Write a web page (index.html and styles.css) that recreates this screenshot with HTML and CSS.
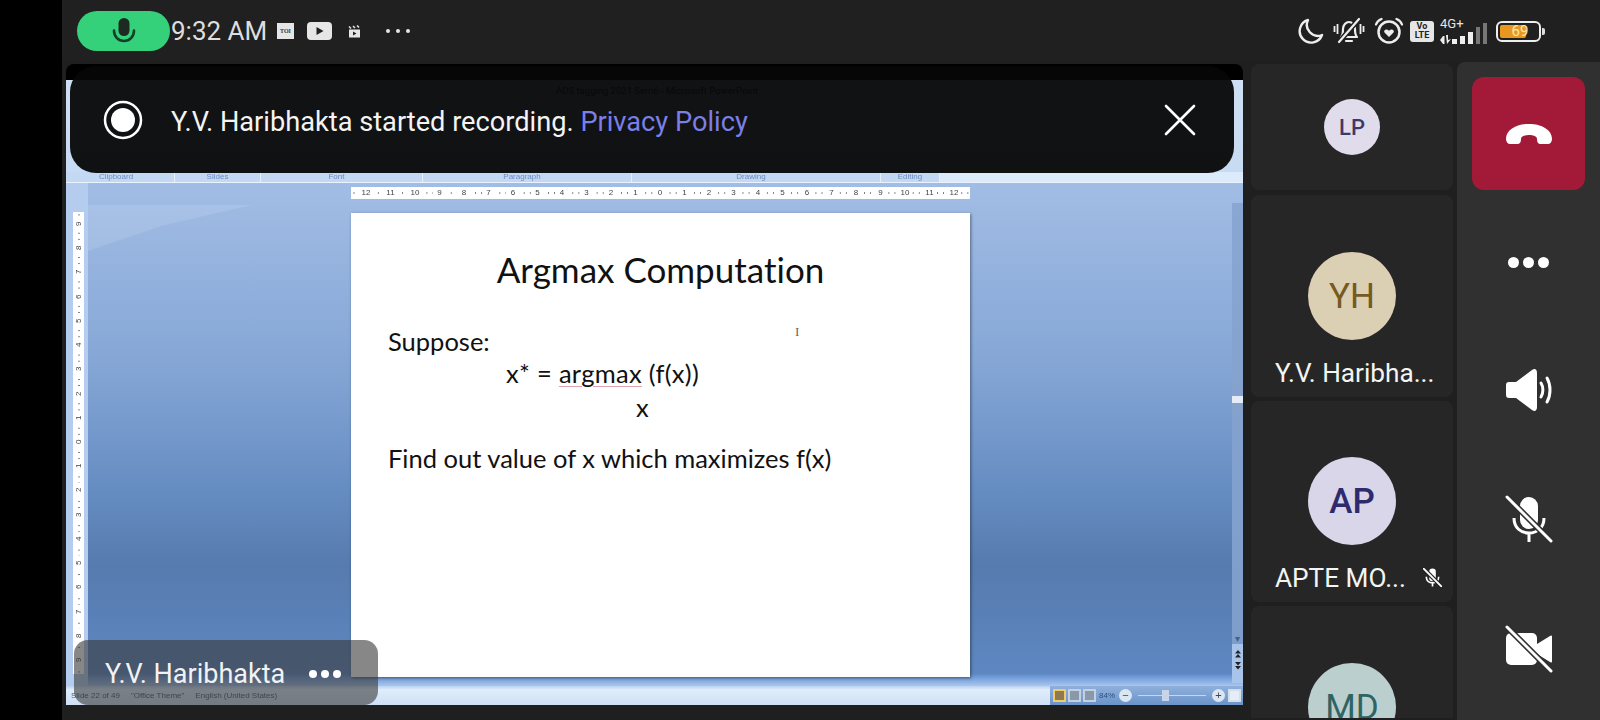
FILE: index.html
```html
<!DOCTYPE html>
<html lang="en">
  <head>
    <meta charset="UTF-8" />
    <title>Meeting</title>
    <link rel="stylesheet" href="styles.css">
  </head>
  <body>
    <div class="phone">
      <header class="status-bar">
        <div class="mic-pill">
          <svg width="24" height="28" viewBox="0 0 24 28"><rect x="6.500" y="1" width="11" height="18" rx="5.500" fill="#1d2a22"/><path d="M2 13.500c0 6.500 4.500 10.500 10 10.500s10-4 10-10.500" fill="none" stroke="#123f28" stroke-width="2.600" stroke-linecap="round"/></svg>
        </div>
        <span class="clock">9:32 AM</span>
        <span class="toi-icon">TOI</span>
        <svg class="yt-icon" width="25" height="18" viewBox="0 0 25 18"><rect width="25" height="18" rx="4" fill="#e6e6e6"/><path d="M9.500 5l7 4-7 4z" fill="#202020"/></svg>
        <svg class="clap-icon" width="13" height="13" viewBox="0 0 13 13"><path d="M1 4.500h11v8H1z" fill="#e6e6e6"/><path d="M5 6.500l3.500 2-3.500 2z" fill="#202020"/><path d="M1 1.500l2 2M5 1l2 2M9 .5l2 2" stroke="#e6e6e6" stroke-width="1.500"/></svg>
        <div class="more-dots"><i></i><i></i><i></i></div>

        <div class="status-right">
          <svg width="26" height="26" viewBox="0 0 26 26"><path d="M10 2A11.500 11.500 0 1 0 24 17 11 11 0 0 1 10 2z" fill="none" stroke="#eee" stroke-width="2.400" stroke-linejoin="round"/></svg>
          <svg class="bell" width="32" height="28" viewBox="0 0 32 28"><path d="M8 20c2-2 2-5 2-8 0-4 3-7 6-7s6 3 6 7c0 3 0 6 2 8z" fill="none" stroke="#eee" stroke-width="2.200" stroke-linejoin="round"/><path d="M13 24h6" stroke="#eee" stroke-width="2.200" stroke-linecap="round"/><path d="M1.500 9v6M4.500 7v10M27.500 7v10M30.500 9v6" stroke="#eee" stroke-width="1.800"/><path d="M6 25L26 2" stroke="#202020" stroke-width="5"/><path d="M6 25L26 2" stroke="#eee" stroke-width="2.200" stroke-linecap="round"/></svg>
          <svg class="alarm" width="30" height="28" viewBox="0 0 30 28"><circle cx="15" cy="15" r="10.500" fill="none" stroke="#eee" stroke-width="2.500"/><path d="M2 7.500C3 4.500 5 3 7.500 2M28 7.500C27 4.500 25 3 22.500 2" fill="none" stroke="#eee" stroke-width="2.300" stroke-linecap="round"/><path d="M15 20l-4.500-4.500c-1.500-2 1.800-4.500 4.500-1.800 2.700-2.700 6-.2 4.500 1.800z" fill="#eee"/></svg>
          <div class="volte">Vo<br />LTE</div>
          <div class="network">
            <span class="net-type">4G+</span>
            <svg class="net-arrows" width="11" height="9" viewBox="0 0 11 9"><path d="M0 5l3-4v8zM6 0h2v5l3-1-4 5z" fill="#eee"/><path d="M3 1h1.500v8H3z" fill="#eee"/></svg>
            <div class="bars"><i class="bar-a"></i><i class="bar-b"></i><i class="bar-c"></i><i class="bar-d"></i><i class="bar-e"></i></div>
          </div>
          <div class="battery"><div class="battery-fill"></div><span>69</span></div>
          <i class="battery-tip"></i>
        </div>
      </header>

      <main class="call">
        <section class="stage">
          <div class="ppt">
            <div class="ribbon">
              <div class="ppt-title">ADS tagging 2021 Sem6 - Microsoft PowerPoint</div>
              <div class="ribbon-groups">
                <span class="grp-clip">Clipboard</span>
                <span class="grp-slides">Slides</span>
                <span class="grp-font">Font</span>
                <span class="grp-para">Paragraph</span>
                <span class="grp-draw">Drawing</span>
                <span class="grp-edit">Editing</span>
              </div>
            </div>
            <div class="ppt-body">
              <div class="left-strip">
                <div class="v-ruler">
                  <span>9</span><span>8</span><span>7</span><span>6</span><span>5</span><span>4</span><span>3</span><span>2</span><span>1</span><span>0</span><span>1</span><span>2</span><span>3</span><span>4</span><span>5</span><span>6</span><span>7</span><span>8</span><span>9</span>
                </div>
              </div>
              <div class="canvas">
                <div class="h-ruler">
                  <span>12</span><span>11</span><span>10</span><span>9</span><span>8</span><span>7</span><span>6</span><span>5</span><span>4</span><span>3</span><span>2</span><span>1</span><span>0</span><span>1</span><span>2</span><span>3</span><span>4</span><span>5</span><span>6</span><span>7</span><span>8</span><span>9</span><span>10</span><span>11</span><span>12</span>
                </div>
                <div class="slide">
                  <h1>Argmax Computation</h1>
                  <p class="suppose">Suppose:</p>
                  <p class="formula">x* = <span class="squiggle">argmax</span> (f(x))</p>
                  <p class="under">x</p>
                  <p class="find">Find out value of x which maximizes f(x)</p>
                  <span class="text-cursor">I</span>
                </div>
              </div>
              <div class="scrollbar">
                <div class="scroll-track"><i class="scroll-thumb"></i><span class="scroll-down">▾</span></div>
                <div class="scroll-btns">
                  <svg width="8" height="24" viewBox="0 0 8 24"><path d="M4 1l3 3.500H1zM4 5l3 3.500H1zM1 13h6l-3 3.500zM1 17h6l-3 3.500z" fill="#222"/></svg>
                </div>
              </div>
            </div>
            <div class="ppt-status">
              <div class="ppt-status-left">
                <span>Slide 22 of 49</span><span>"Office Theme"</span><span>English (United States)</span>
              </div>
              <div class="ppt-status-right">
                <div class="view-btns"><i class="view-btn on"></i><i class="view-btn"></i><i class="view-btn"></i></div>
                <span class="zoom-pct">84%</span>
                <i class="zoom-btn">−</i>
                <div class="zoom-track"><i></i></div>
                <i class="zoom-btn">+</i>
                <i class="view-btn fit"></i>
              </div>
            </div>
          </div>

          <div class="toast">
            <svg width="40" height="40" viewBox="0 0 40 40"><circle cx="20" cy="20" r="18" fill="none" stroke="#fff" stroke-width="2.500"/><circle cx="20" cy="20" r="12" fill="#fff"/></svg>
            <p class="toast-text">Y.V. Haribhakta started recording. <a href="#">Privacy Policy</a></p>
            <svg class="toast-close" width="32" height="32" viewBox="0 0 32 32"><path d="M2 2l28 28M30 2L2 30" stroke="#fff" stroke-width="2.600" stroke-linecap="round"/></svg>
          </div>

          <div class="speaker-tag">
            <span>Y.V. Haribhakta</span>
            <div class="tag-dots"><i></i><i></i><i></i></div>
          </div>
        </section>

        <aside class="tiles">
          <div class="tile tile-small">
            <div class="avatar avatar-sm avatar-lp">LP</div>
          </div>
          <div class="tile tile-yh">
            <div class="avatar avatar-yh">YH</div>
            <div class="tile-name">Y.V. Haribha...</div>
          </div>
          <div class="tile tile-ap">
            <div class="avatar avatar-ap">AP</div>
            <div class="tile-name">APTE MO...
              <svg class="name-mute" width="19" height="19" viewBox="0 0 46 46"><rect x="15" y="1" width="16" height="31" rx="8" fill="#fff"/><path d="M8 21c0 10 7 15 15 15s15-5 15-15M23 36v9" fill="none" stroke="#fff" stroke-width="4"/><path d="M1 1l44 44" stroke="#262626" stroke-width="10"/><path d="M1 1l44 44" stroke="#fff" stroke-width="4.500" stroke-linecap="round"/></svg>
            </div>
          </div>
          <div class="tile tile-md">
            <div class="avatar avatar-md">MD</div>
          </div>
        </aside>

        <nav class="controls">
          <button class="end-call" type="button">
            <svg width="46" height="20" viewBox="0 0 46 20"><path d="M0 15C0 6 10 0 23 0s23 6 23 15c0 3-2 5-4 5h-7c-3 0-4-2-4-5 0-3-4-4-8-4s-8 1-8 4c0 3-1 5-4 5H4c-2 0-4-2-4-5z" fill="#fff"/></svg>
          </button>
          <div class="control">
            <div class="control-dots"><i></i><i></i><i></i></div>
          </div>
          <div class="control">
            <svg width="46" height="42" viewBox="0 0 46 42"><path d="M3 13h7L26 1c3-2 5-.5 5 3v34c0 3.500-2 5-5 3L10 29H3c-2 0-3-1-3-3V16c0-2 1-3 3-3z" fill="#fff"/><path d="M35 14c2.500 4 2.500 10 0 14M41 9c4 7 4 17 0 24" fill="none" stroke="#fff" stroke-width="3" stroke-linecap="round"/></svg>
          </div>
          <div class="control control-off">
            <svg width="48" height="48" viewBox="0 0 48 48"><rect x="15" y="2" width="18" height="32" rx="9" fill="#fff"/><path d="M9 23c0 10 7 15 15 15s15-5 15-15M24 38v9" fill="none" stroke="#fff" stroke-width="3"/><path d="M2 2l44 44" stroke="#303030" stroke-width="6"/><path d="M2 2l44 44" stroke="#fff" stroke-width="3" stroke-linecap="round"/></svg>
          </div>
          <div class="control control-off">
            <svg width="48" height="48" viewBox="0 0 48 48"><rect x="1" y="8" width="31" height="32" rx="5" fill="#fff"/><path d="M32 19l13-8c1.500-1 2-.5 2 1v24c0 1.500-.5 2-2 1l-13-8z" fill="#fff"/><path d="M2 2l44 44" stroke="#303030" stroke-width="6"/><path d="M2 2l44 44" stroke="#fff" stroke-width="3" stroke-linecap="round"/></svg>
          </div>
        </nav>
      </main>
    </div>
  </body>
</html>
```
FILE: styles.css
```css
* {
  box-sizing: border-box;
}

body {
  margin: 0;
  width: 1600px;
  height: 720px;
  overflow: hidden;
  background-color: #000;
  font-family: "Roboto", sans-serif;
}

.phone {
  margin-left: 62px;
  width: 1538px;
  height: 720px;
  background-color: #1f1f1f;
  display: flex;
  flex-direction: column;
}

/* status bar */
.status-bar {
  height: 62px;
  display: flex;
  align-items: center;
  padding-left: 15px;
  background-color: #202020;
}

.mic-pill {
  width: 93px;
  height: 40px;
  border-radius: 20px;
  background-color: #35d07a;
  display: flex;
  align-items: center;
  justify-content: center;
}

.clock {
  margin-left: 1px;
  width: 106px;
  font-size: 26px;
  color: #dedede;
}

.toi-icon {
  width: 17px;
  height: 16px;
  background-color: #e6e6e6;
  color: #333;
  font-family: "Liberation Serif", serif;
  font-size: 6px;
  font-weight: bold;
  line-height: 16px;
  text-align: center;
}

.yt-icon {
  margin-left: 13px;
}

.clap-icon {
  margin-left: 16px;
}

.more-dots {
  margin-left: 25px;
  display: flex;
  gap: 6px;
}

.more-dots i {
  width: 4px;
  height: 4px;
  border-radius: 50%;
  background-color: #e6e6e6;
}

.status-right {
  margin-left: auto;
  margin-right: 55px;
  display: flex;
  align-items: center;
}

.bell {
  margin-left: 9px;
}

.alarm {
  margin-left: 9px;
}

.volte {
  margin-left: 6px;
  width: 24px;
  height: 21px;
  border-radius: 3px;
  background-color: #e6e6e6;
  color: #222;
  font-size: 9px;
  font-weight: bold;
  line-height: 9.500px;
  text-align: center;
  padding-top: 1px;
}

.network {
  position: relative;
  margin-left: 6px;
  width: 47px;
  height: 26px;
}

.net-type {
  position: absolute;
  left: 0;
  top: -2px;
  font-size: 13px;
  color: #e6e6e6;
}

.net-arrows {
  position: absolute;
  left: 0;
  bottom: 0;
}

.bars {
  position: absolute;
  right: 0;
  bottom: 0;
  display: flex;
  align-items: flex-end;
  gap: 3px;
}

.bars i {
  width: 5px;
  background-color: #eee;
}

.bars .bar-a {
  height: 5px;
}

.bars .bar-b {
  height: 8px;
}

.bars .bar-c {
  height: 12px;
}

.bars .bar-d {
  width: 4px;
  height: 17px;
  background-color: #777;
}

.bars .bar-e {
  width: 4px;
  height: 21px;
  background-color: #777;
}

.battery {
  position: relative;
  margin-left: 9px;
  width: 45px;
  height: 21px;
  border: 2px solid #eee;
  border-radius: 6px;
  padding: 2px;
  color: #ffe6b0;
  font-size: 15px;
  line-height: 17px;
  text-align: center;
}

.battery-fill {
  width: 26px;
  height: 13px;
  border-radius: 2px;
  background-color: #e8981f;
}

.battery span {
  position: absolute;
  left: 10px;
  top: 0;
  width: 24px;
}

.battery-tip {
  margin-left: 1px;
  width: 3px;
  height: 7px;
  border-radius: 0 2px 2px 0;
  background-color: #ddd;
}

/* call area */
.call {
  flex: 1;
  display: flex;
  min-height: 0;
}

.stage {
  position: relative;
  margin: 2px 0 15px 4px;
  width: 1177px;
  padding-top: 16px;
  background-color: #000;
  border-radius: 8px 8px 0 0;
}

.ppt {
  height: 625px;
  display: flex;
  flex-direction: column;
  background-color: #c6daf3;
}

.ribbon {
  height: 103px;
  display: flex;
  flex-direction: column;
  justify-content: space-between;
  background: linear-gradient(#cfe0f5, #c6daf3);
  border-bottom: 1px solid #e9f2fd;
}

.ppt-title {
  margin-top: 5px;
  padding-left: 5px;
  text-align: center;
  font-size: 9.500px;
  color: #333;
}

.ribbon-groups {
  height: 10px;
  display: flex;
  font-family: "Liberation Sans", sans-serif;
  font-size: 8px;
  line-height: 10px;
  color: #6d8cc0;
  background-color: #dcebfc;
  text-align: center;
  filter: blur(0.3px);
}

.ribbon-groups span {
  background-color: #c3d8f2;
  border-right: 1px solid #e6f0fc;
}

.grp-clip {
  width: 109px;
  padding-right: 8px;
}

.grp-slides {
  width: 86px;
}

.grp-font {
  width: 162px;
  padding-right: 10px;
}

.grp-para {
  width: 209px;
  padding-right: 10px;
}

.grp-draw {
  width: 249px;
  padding-right: 10px;
}

.grp-edit {
  width: 59px;
}

.ppt-body {
  flex: 1;
  min-height: 0;
  display: flex;
  background: linear-gradient(#a2bde5 0%, #86a7d6 35%, #678ec3 60%, #567bae 76%, #5e87c1 97.500%, #6f9ad8 98.200%, #a9c6ee 100%);
}

.left-strip {
  width: 22px;
  padding: 29px 4px 0 7px;
  background-color: #b4cced;
}

.v-ruler {
  width: 11px;
  height: 462px;
  padding: 5px 0 7px;
  display: flex;
  flex-direction: column;
  justify-content: space-between;
  align-items: center;
  font-family: "Liberation Sans", sans-serif;
  font-size: 8px;
  color: #444;
  background: #fff linear-gradient(#777 1px, transparent 1px) center / 2px 6.100px repeat-y;
  filter: blur(0.4px);
}

.v-ruler span {
  height: 14px;
  width: 11px;
  background-color: #fff;
  writing-mode: vertical-rl;
  transform: rotate(180deg);
  display: flex;
  align-items: center;
  justify-content: center;
}

.canvas {
  position: relative;
  width: 1144px;
  padding-top: 4px;
  display: flex;
  flex-direction: column;
  align-items: center;
}

/* the pale wedge at the top left of the workspace */
.canvas::before {
  content: "";
  position: absolute;
  left: 0;
  top: 22px;
  width: 164px;
  height: 46px;
  background-color: rgba(255, 255, 255, 0.11);
  clip-path: polygon(0 0, 100% 0, 45% 45%, 0 100%);
}

.h-ruler {
  margin-left: 1px;
  width: 619px;
  height: 12px;
  padding: 0 9px 0 8px;
  display: flex;
  justify-content: space-between;
  font-family: "Liberation Sans", sans-serif;
  font-size: 8px;
  line-height: 12px;
  color: #444;
  background: #fff linear-gradient(90deg, #777 1px, transparent 1px) center / 6.080px 2px repeat-x;
  filter: blur(0.4px);
}

.h-ruler span {
  width: 14px;
  text-align: center;
  background-color: #fff;
}

.slide {
  position: relative;
  margin: 14px 0 0 1px;
  width: 619px;
  height: 464px;
  padding: 0 0 0 37px;
  background-color: #fff;
  box-shadow: 1px 1px 3px rgba(0, 0, 0, 0.45);
  font-family: "Lato", sans-serif;
  font-variant-ligatures: none;
  color: #111;
  font-size: 25.500px;
}

.slide h1 {
  margin: 33px 0 0 -37px;
  font-size: 35px;
  font-weight: 400;
  line-height: 46px;
  text-align: center;
}

.slide p {
  margin: 0;
  line-height: 30px;
}

.suppose {
  padding-top: 34px;
}

.formula {
  padding-left: 118px;
  padding-top: 2px;
  letter-spacing: 0.3px;
}

.squiggle {
  text-decoration: underline solid #e3a0b0 1px;
  text-underline-offset: 3px;
}

.under {
  padding-left: 248px;
  padding-top: 4px;
}

.find {
  padding-top: 21px;
}

.text-cursor {
  position: absolute;
  left: 444px;
  top: 111px;
  font-family: "Liberation Serif", serif;
  font-size: 13px;
  color: #666;
}

.scrollbar {
  width: 11px;
  height: 480px;
  margin-top: 20px;
  display: flex;
  flex-direction: column;
  background-color: #a9c4ea;
}

.scroll-track {
  position: relative;
  height: 441px;
  background: linear-gradient(#8aa6d2, #7e9dcb);
  text-align: center;
}

.scroll-thumb {
  position: absolute;
  left: 0;
  top: 193px;
  width: 11px;
  height: 7px;
  background-color: #e4ecf7;
}

.scroll-down {
  position: absolute;
  left: 0;
  right: 0;
  bottom: 0;
  font-size: 10px;
  line-height: 10px;
  color: #46608c;
}

.scroll-btns {
  flex: 1;
  display: flex;
  justify-content: center;
  padding-top: 5px;
}

.ppt-status {
  height: 19px;
  display: flex;
  justify-content: space-between;
  background: linear-gradient(#b9d1f0, #e0edfb 20%, #cfe0f6);
  font-family: "Liberation Sans", sans-serif;
  font-size: 8px;
  color: #48597a;
}

.ppt-status-left {
  display: flex;
  align-items: center;
  gap: 11px;
  padding-left: 5px;
  filter: blur(0.3px);
}

.ppt-status-right {
  width: 193px;
  display: flex;
  align-items: center;
  gap: 3px;
  padding: 0 2px 0 3px;
  background: linear-gradient(#8fb0dc, #6b93c9);
  color: #2d4f85;
  filter: blur(0.4px);
}

.view-btns {
  display: flex;
  gap: 2px;
}

.view-btn {
  width: 13px;
  height: 13px;
  border: 2px solid #c3d0e0;
  background-color: #8a98aa;
}

.view-btn.on {
  border-color: #f2ca6e;
  background-color: #8f7a50;
}

.view-btn.fit {
  background-color: #e5edf6;
  border-color: #d5dfea;
}

.zoom-pct {
  margin-right: 1px;
}

.zoom-btn {
  width: 13px;
  height: 13px;
  border-radius: 50%;
  background-color: #dbe6f3;
  color: #445;
  font-style: normal;
  font-size: 11px;
  line-height: 12px;
  text-align: center;
}

.zoom-track {
  position: relative;
  flex: 1;
  height: 1px;
  margin: 0 3px;
  background-color: #c6d7ee;
}

.zoom-track i {
  position: absolute;
  left: 24px;
  top: -5px;
  width: 7px;
  height: 11px;
  background-color: #c7d5e6;
}

.toast {
  position: absolute;
  left: 4px;
  top: 2px;
  width: 1164px;
  height: 107px;
  padding: 0 38px 0 33px;
  display: flex;
  align-items: center;
  border-radius: 26px;
  background-color: rgba(6, 6, 6, 0.95);
}

.toast-text {
  margin: 4px 0 0 28px;
  font-size: 27.200px;
  color: #f4f4f4;
}

.toast-text a {
  color: #7b7fe8;
  text-decoration: none;
}

.toast-close {
  margin-left: auto;
}

.speaker-tag {
  position: absolute;
  left: 8px;
  bottom: 0;
  width: 304px;
  height: 65px;
  padding: 3px 0 0 31px;
  display: flex;
  align-items: center;
  gap: 24px;
  border-radius: 14px;
  background-color: rgba(55, 55, 55, 0.6);
  font-size: 27px;
  color: #f2f2f2;
}

.tag-dots,
.control-dots {
  display: flex;
  gap: 4px;
}

.tag-dots i {
  width: 8px;
  height: 8px;
  border-radius: 50%;
  background-color: #fff;
}

/* participants */
.tiles {
  margin: 2px 0 0 8px;
  width: 202px;
  height: 654px;
  overflow: hidden;
  display: flex;
  flex-direction: column;
  gap: 4px;
  flex-shrink: 0;
}

.tile {
  flex-shrink: 0;
  border-radius: 8px;
  background-color: #262626;
  display: flex;
  flex-direction: column;
  align-items: center;
  padding-top: 57px;
}

.tile-small {
  height: 126px;
  margin-bottom: 1px;
  padding-top: 35px;
}

.tile-yh {
  height: 202px;
}

.tile-ap {
  height: 201px;
  padding-top: 56px;
}

.tile-md {
  height: 120px;
}

.avatar {
  flex-shrink: 0;
  width: 88px;
  height: 88px;
  border-radius: 50%;
  display: flex;
  align-items: center;
  justify-content: center;
  font-size: 35px;
  font-weight: 500;
}

.avatar-sm {
  width: 56px;
  height: 56px;
  font-size: 22px;
}

.avatar-lp {
  background-color: #e0dcec;
  color: #3c3a68;
}

.avatar-yh {
  background-color: #dbcfb4;
  color: #765a1f;
  font-weight: 400;
}

.avatar-ap {
  background-color: #d9d6ea;
  color: #2f2a6e;
}

.avatar-md {
  background-color: #bccfcf;
  color: #2f6463;
  font-weight: 400;
}

.tile-name {
  align-self: flex-start;
  margin: 18px 0 0 24px;
  font-size: 26.200px;
  line-height: 30px;
  color: #f4f4f4;
  white-space: nowrap;
  display: flex;
  align-items: center;
  gap: 17px;
}

.name-mute {
  flex-shrink: 0;
  margin-top: -2px;
}

/* right controls */
.controls {
  margin-left: 4px;
  width: 143px;
  display: flex;
  flex-direction: column;
  align-items: center;
  border-radius: 8px 0 0 0;
  background-color: #303030;
  padding-top: 15px;
}

.end-call {
  width: 113px;
  height: 113px;
  margin-bottom: 8px;
  border: none;
  border-radius: 12px;
  background-color: #a31a38;
  display: flex;
  align-items: center;
  justify-content: center;
  padding: 0;
}

.control {
  height: 128px;
  flex-shrink: 0;
  display: flex;
  align-items: center;
  justify-content: center;
}

.control-off {
  height: 130px;
}

.control-dots i {
  width: 11px;
  height: 11px;
  border-radius: 50%;
  background-color: #fff;
}
```
